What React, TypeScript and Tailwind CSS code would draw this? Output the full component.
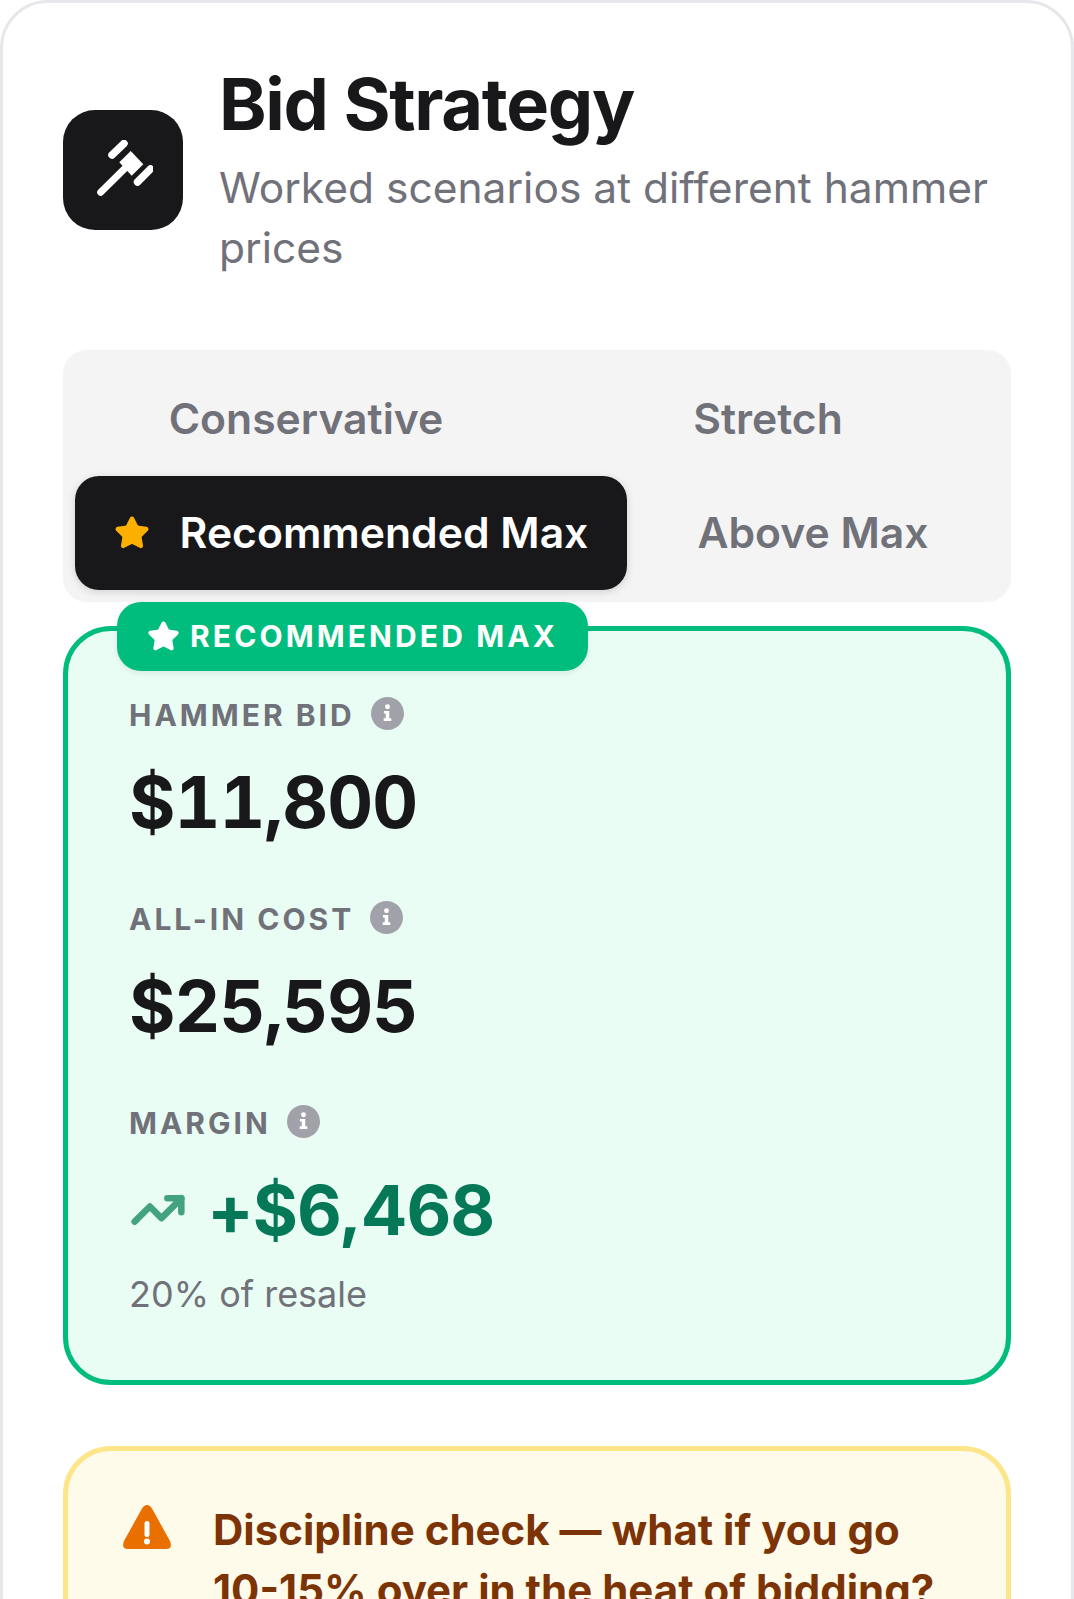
import { Star, TrendingUp } from "lucide-react";

const sans = "font-['Inter',sans-serif]";

function InfoDot() {
  return (
    <svg viewBox="0 0 32 32" className="h-[33px] w-[33px] -translate-y-[2px]" aria-hidden="true">
      <circle cx="16" cy="16" r="16" fill="#a1a1aa" />
      <circle cx="16" cy="9.5" r="2.4" fill="#ffffff" />
      <path d="M12.5 13.5h5.2v7.2h2v2.6h-7.4v-2.6h2v-4.6h-1.8z" fill="#ffffff" />
    </svg>
  );
}

function Stat({ label, value }: { label: string; value: string }) {
  return (
    <div>
      <div className="flex h-[33px] items-center gap-[16px]">
        <span className="text-[30px] font-bold tracking-[3px] text-[#71717a]">{label}</span>
        <InfoDot />
      </div>
      <div className="mt-[26px] text-[71px] leading-[88px] font-bold tracking-[-1px] text-[#18181b] tabular-nums">
        {value}
      </div>
    </div>
  );
}

export default function App() {
  return (
    <div className={`${sans} min-h-[1599px] w-[1074px] overflow-hidden bg-white`}>
      <div className="h-[1680px] rounded-t-[48px] border-[3px] border-[#e5e7eb] px-[60px]">
        {/* Header */}
        <div className="flex items-center gap-[36px] pt-[59px]">
          <div className="flex h-[120px] w-[120px] shrink-0 items-center justify-center rounded-[32px] bg-[#18181b]">
            <svg viewBox="0 0 60 60" className="h-[60px] w-[60px]" aria-hidden="true">
              <g stroke="#ffffff" strokeLinecap="round" fill="none">
                <line x1="19" y1="15" x2="31" y2="3.5" strokeWidth="7.5" />
                <line x1="44.5" y1="42" x2="57.5" y2="29" strokeWidth="7.5" />
                <line x1="7.7" y1="52.3" x2="32" y2="28.3" strokeWidth="7" />
              </g>
              <path d="M37.7 11 L50.3 24.3 L38.7 35.7 L26.3 22.3Z" fill="#ffffff" />
            </svg>
          </div>
          <div>
            <h1 className="text-[72px] leading-[84px] font-bold tracking-[-1.3px] text-[#18181b]">
              Bid Strategy
            </h1>
            <p className="mt-[12px] text-[42.5px] leading-[60px] text-[#71717a]">
              Worked scenarios at different hammer prices
            </p>
          </div>
        </div>

        {/* Scenario tabs */}
        <div className="mt-[72px] rounded-[24px] bg-[#f4f4f5] p-[12px]">
          <div className="flex h-[114px] text-[42.67px] font-semibold text-[#71717a]">
            <div className="flex flex-1 items-center justify-center">Conservative</div>
            <div className="flex flex-1 items-center justify-center">Stretch</div>
          </div>
          <div className="flex h-[114px] text-[42.67px] font-semibold text-[#71717a]">
            <div className="flex w-[552px] items-center justify-center gap-[30px] rounded-[24px] bg-[#18181b] text-white shadow-[0_2px_8px_rgba(0,0,0,0.15)]">
              <Star className="h-[36px] w-[36px] fill-[#fbb000] text-[#fbb000]" />
              Recommended Max
            </div>
            <div className="flex flex-1 items-center justify-center">Above Max</div>
          </div>
        </div>

        {/* Recommended scenario */}
        <div className="relative mt-[24px] h-[759px] rounded-[48px] border-[5px] border-[#00bd7e] bg-[#e9fdf4] px-[61px] pt-[68px]">
          <div className="absolute -top-[29px] left-[49px] flex h-[69px] w-[471px] items-center justify-center gap-[10px] rounded-[24px] bg-[#00bd7e] text-[30px] font-bold tracking-[3.1px] text-white shadow-[0_2px_6px_rgba(0,0,0,0.08)]">
            <Star className="h-[33px] w-[33px] fill-white text-white" />
            RECOMMENDED MAX
          </div>
          <div className="flex flex-col gap-[57px]">
            <Stat label="HAMMER BID" value="$11,800" />
            <Stat label="ALL-IN COST" value="$25,595" />
            <div>
              <div className="flex h-[33px] items-center gap-[16px]">
                <span className="text-[30px] font-bold tracking-[3px] text-[#71717a]">MARGIN</span>
                <InfoDot />
              </div>
              <div className="mt-[26px] flex items-center gap-[21px]">
                <TrendingUp className="ml-[1px] h-[56px] w-[56px] text-[#43a37f]" strokeWidth={2.8} />
                <span className="text-[69px] leading-[88px] font-bold tracking-[-1px] text-[#047857]">
                  +$6,468
                </span>
              </div>
              <div className="mt-[15px] text-[36px] leading-[50px] text-[#71717a]">20% of resale</div>
            </div>
          </div>
        </div>

        {/* Discipline warning */}
        <div className="mt-[61px] flex gap-[42px] rounded-[48px] border-[5px] border-[#fde68a] bg-[#fffbeb] px-[55px] pt-[49px] pb-[40px]">
          <svg viewBox="0 0 48 44" className="mt-[5px] h-[44px] w-[48px] shrink-0" aria-hidden="true">
            <path
              d="M24 0 Q27 0 29 3.5 L47 36 Q50 44 43 44 L5 44 Q-2 44 1 36 L19 3.5 Q21 0 24 0Z"
              fill="#e86f00"
            />
            <rect x="21.5" y="16" width="5" height="16" rx="2.5" fill="#ffffff" />
            <circle cx="24" cy="36.5" r="3" fill="#ffffff" />
          </svg>
          <p className="text-[42px] leading-[60px] font-bold text-[#7c3406]">
            Discipline check — what if you go 10-15% over in the heat of bidding?
          </p>
        </div>
      </div>
    </div>
  );
}
